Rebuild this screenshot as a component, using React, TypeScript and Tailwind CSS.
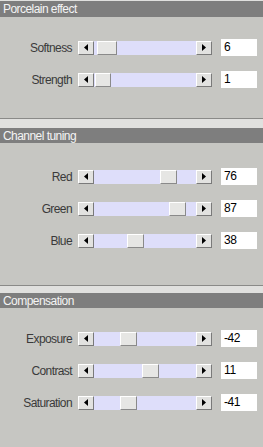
const font = { fontFamily: '"Liberation Sans", Arial, sans-serif' };

type Row = { label: string; value: number; min: number; max: number; thumb: number };

const Arrow = ({ dir }: { dir: "left" | "right" }) => (
  <svg width="4" height="7" viewBox="0 0 4 7">
    {dir === "left" ? <path d="M4 0 L0 3.5 L4 7 Z" fill="#000" /> : <path d="M0 0 L4 3.5 L0 7 Z" fill="#000" />}
  </svg>
);

const Btn = ({ dir }: { dir: "left" | "right" }) => (
  <div className="w-[16px] h-[14px] flex items-center justify-center bg-[#e2e2e0] border-t border-l border-t-white border-l-white border-b border-r border-b-[#7a7a7a] border-r-[#7a7a7a]">
    <Arrow dir={dir} />
  </div>
);

const Slider = ({ row }: { row: Row }) => {
  const travel = 102 - row.thumb;
  const left = Math.round(((row.value - row.min) / (row.max - row.min)) * travel) + 1;
  return (
    <div className="flex items-center w-[134px]">
      <Btn dir="left" />
      <div className="relative flex-1 h-[14px] bg-[#dedefa]">
        <div
          className="absolute top-0 h-[14px] bg-[#e6e6e4] border-t border-l border-t-white border-l-white border-b border-r border-b-[#8a8a8a] border-r-[#8a8a8a]"
          style={{ left, width: row.thumb }}
        />
      </div>
      <Btn dir="right" />
    </div>
  );
};

const SliderRow = ({ row }: { row: Row }) => (
  <div className="flex items-center h-[17px]">
    <div className="w-[72px] text-right text-[12px] tracking-[-0.6px] text-[#3a3a3a] mr-[6px]">{row.label}</div>
    <Slider row={row} />
    <div className="ml-[9px] w-[36px] h-[17px] bg-white text-[12px] tracking-[-0.4px] text-black pl-[3px] leading-[16px]">
      {row.value}
    </div>
  </div>
);

const Header = ({ title, h }: { title: string; h: string }) => (
  <div className={`${h} bg-[#7e7e7e] flex items-center pl-[3px] text-[12px] tracking-[-0.55px] text-[#f4f4f4]`}>{title}</div>
);

const porcelain: Row[] = [
  { label: "Softness", value: 6, min: 0, max: 300, thumb: 20 },
  { label: "Strength", value: 1, min: 0, max: 300, thumb: 16 },
];
const channels: Row[] = [
  { label: "Red", value: 76, min: 0, max: 100, thumb: 17 },
  { label: "Green", value: 87, min: 0, max: 100, thumb: 17 },
  { label: "Blue", value: 38, min: 0, max: 100, thumb: 17 },
];
const compensation: Row[] = [
  { label: "Exposure", value: -42, min: -100, max: 100, thumb: 17 },
  { label: "Contrast", value: 11, min: -100, max: 100, thumb: 17 },
  { label: "Saturation", value: -41, min: -100, max: 100, thumb: 17 },
];

export default function App() {
  return (
    <div className="w-[263px] h-[447px] flex flex-col bg-[#c6c6c2] overflow-hidden" style={font}>
      <div className="h-[1px] bg-[#e0e0de]" />
      <Header title="Porcelain effect" h="h-[16px]" />
      <div className="h-[102px] pt-[22px] flex flex-col gap-[15px] border-b border-[#8a8a88]">
        {porcelain.map((r) => (
          <SliderRow key={r.label} row={r} />
        ))}
      </div>
      <div className="h-[9px] bg-[#e0e0de]" />
      <Header title="Channel tuning" h="h-[15px]" />
      <div className="h-[143px] pt-[25px] flex flex-col gap-[15px] border-b border-[#8a8a88]">
        {channels.map((r) => (
          <SliderRow key={r.label} row={r} />
        ))}
      </div>
      <div className="h-[7px] bg-[#e0e0de]" />
      <Header title="Compensation" h="h-[15px]" />
      <div className="flex-1 pt-[22px] flex flex-col gap-[15px]">
        {compensation.map((r) => (
          <SliderRow key={r.label} row={r} />
        ))}
      </div>
    </div>
  );
}
